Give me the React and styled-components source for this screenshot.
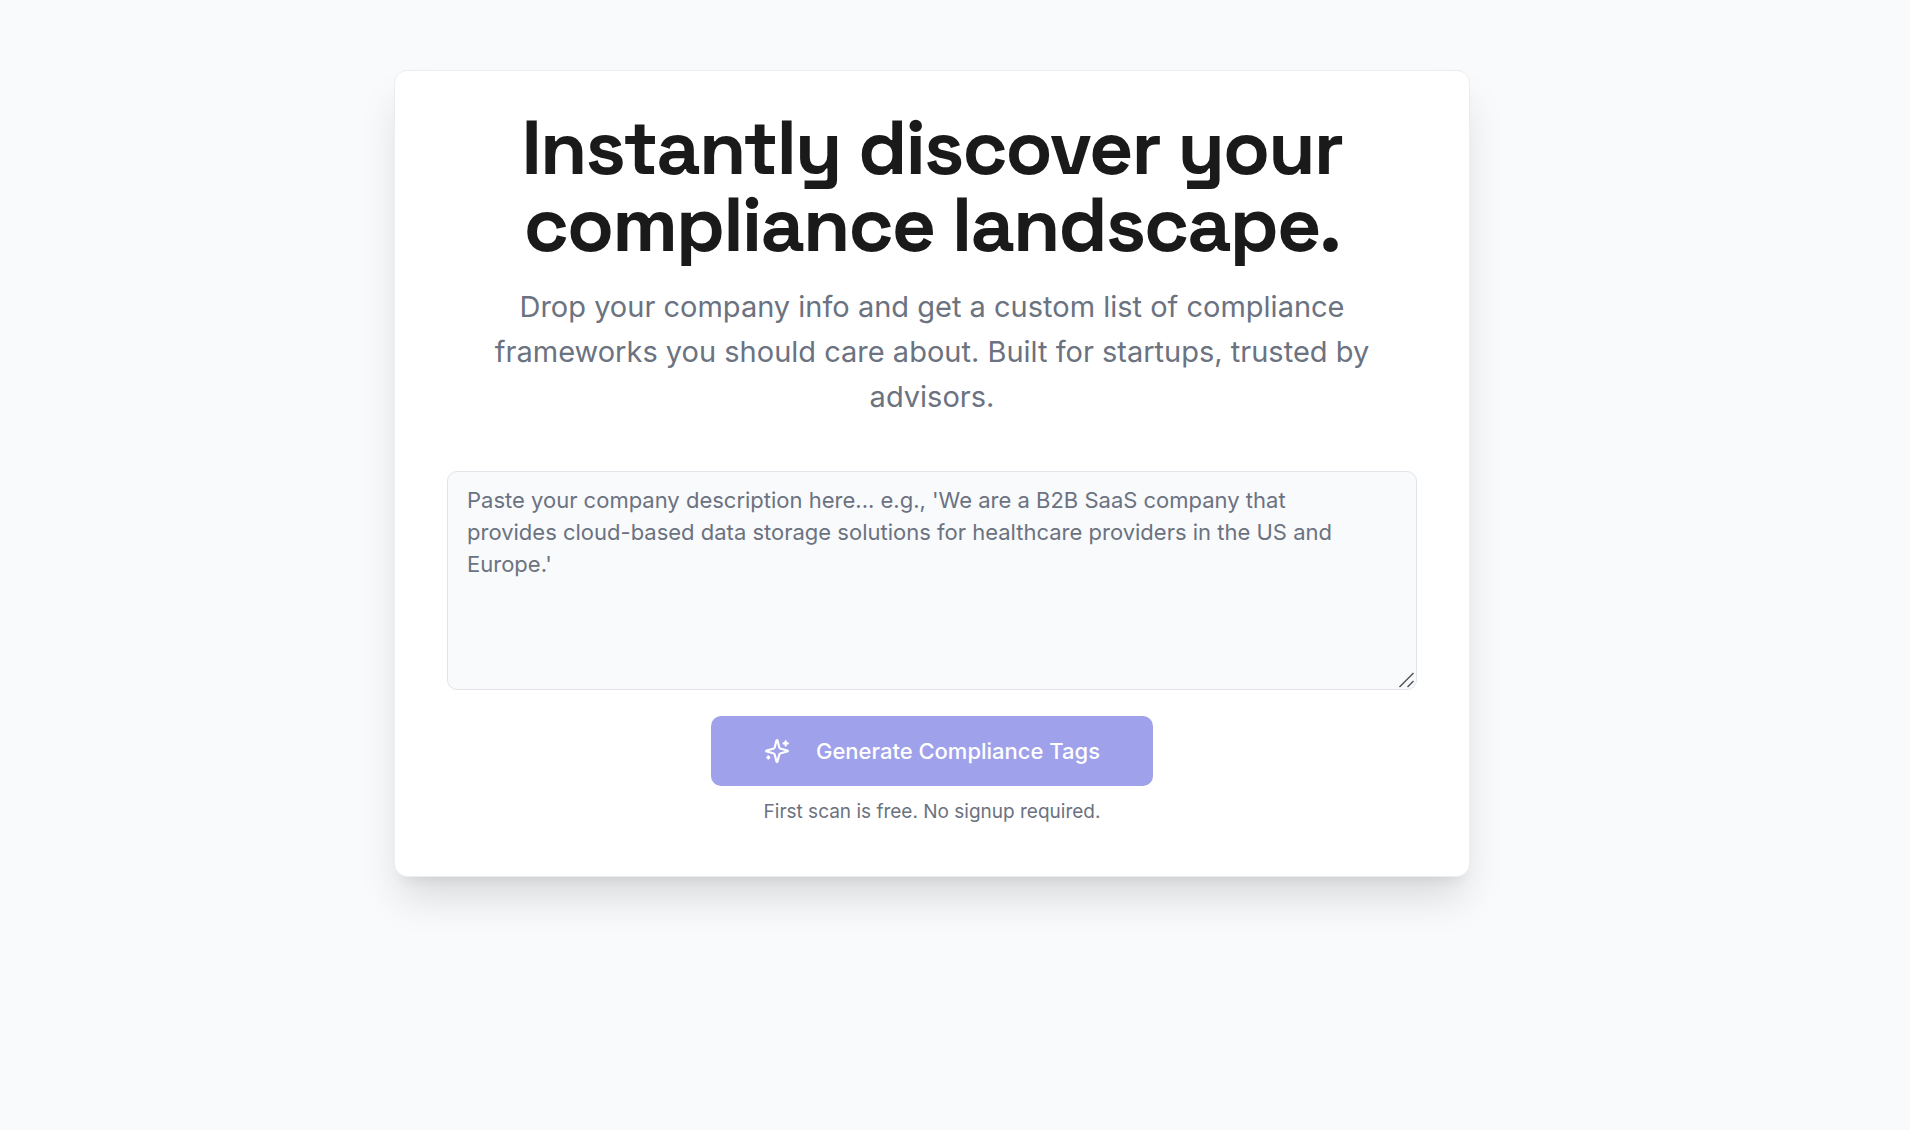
import React, { useState } from "react";
import styled, { createGlobalStyle } from "styled-components";

const GlobalStyle = createGlobalStyle`
  *, *::before, *::after {
    box-sizing: border-box;
  }

  body {
    margin: 0;
    background: #f9fafc;
    color: #1a1a1a;
    font-family: Inter, "Liberation Sans", sans-serif;
    -webkit-font-smoothing: antialiased;
  }
`;

const Page = styled.main`
  display: flex;
  justify-content: center;
  align-items: flex-start;
  min-height: 100vh;
  padding: 70px 70px 70px 24px;
`;

const Card = styled.section`
  width: 100%;
  max-width: 1076px;
  padding: 38px 52px 51px;
  background: #ffffff;
  border: 1px solid #ebedee;
  border-radius: 13px;
  box-shadow:
    0 26px 40px -6px rgba(0, 0, 0, 0.13),
    0 10px 13px -8px rgba(0, 0, 0, 0.08);
`;

const Header = styled.header`
  display: flex;
  flex-direction: column;
  gap: 21px;
  padding: 0 32px;
  text-align: center;
`;

const Title = styled.h1`
  margin: 0;
  font-family: "Space Grotesk", Inter, "Liberation Sans", sans-serif;
  font-size: 77px;
  font-weight: 700;
  line-height: 77px;
  letter-spacing: -0.025em;
`;

const Lead = styled.p`
  margin: 0;
  color: #6b7280;
  font-size: 29px;
  line-height: 45px;
`;

const Form = styled.form`
  display: flex;
  flex-direction: column;
  align-items: center;
  margin-top: 52px;
`;

const Field = styled.div`
  position: relative;
  width: 100%;
`;

const Description = styled.textarea`
  display: block;
  width: 100%;
  height: 219px;
  padding: 12px 39px 12px 19px;
  background: #f9fafc;
  border: 1px solid #e1e4e8;
  border-radius: 10px;
  color: #1a1a1a;
  font-family: inherit;
  font-size: 22px;
  line-height: 32px;
  resize: vertical;

  &::placeholder {
    color: #6b7280;
    opacity: 1;
  }

  &::-webkit-resizer {
    background: transparent;
  }
`;

const Grip = styled.svg`
  position: absolute;
  right: 2px;
  bottom: 2px;
  pointer-events: none;
`;

const SubmitButton = styled.button`
  display: inline-flex;
  align-items: center;
  gap: 26px;
  height: 70px;
  margin-top: 26px;
  padding: 0 53px;
  background: #9fa1ea;
  border: 0;
  border-radius: 10px;
  color: #ffffff;
  font-family: inherit;
  font-size: 22px;
  font-weight: 500;
  line-height: 32px;
`;

const Note = styled.p`
  margin: 13px 0 0;
  color: #6b7280;
  font-size: 19px;
  line-height: 26px;
`;

function SparklesIcon() {
  return (
    <svg
      width="26"
      height="26"
      viewBox="0 0 24 24"
      fill="none"
      stroke="currentColor"
      strokeWidth="2"
      strokeLinecap="round"
      strokeLinejoin="round"
      aria-hidden="true"
    >
      <path d="M9.937 15.5A2 2 0 0 0 8.5 14.063l-6.135-1.582a.5.5 0 0 1 0-.962L8.5 9.936A2 2 0 0 0 9.937 8.5l1.582-6.135a.5.5 0 0 1 .963 0L14.063 8.5A2 2 0 0 0 15.5 9.937l6.135 1.581a.5.5 0 0 1 0 .964L15.5 14.063a2 2 0 0 0-1.437 1.437l-1.582 6.135a.5.5 0 0 1-.963 0z" />
      <path d="M20 3v4" />
      <path d="M22 5h-4" />
      <path d="M4 17v2" />
      <path d="M5 18H3" />
    </svg>
  );
}

export default function App() {
  const [description, setDescription] = useState("");

  return (
    <>
      <GlobalStyle />
      <Page>
        <Card>
          <Header>
            <Title>Instantly discover your compliance landscape.</Title>
            <Lead>
              Drop your company info and get a custom list of compliance
              frameworks you should care about. Built for startups, trusted by
              advisors.
            </Lead>
          </Header>
          <Form onSubmit={(event) => event.preventDefault()}>
            <Field>
              <Description
                aria-label="Company description"
                value={description}
                onChange={(event) => setDescription(event.target.value)}
                placeholder="Paste your company description here... e.g., 'We are a B2B SaaS company that provides cloud-based data storage solutions for healthcare providers in the US and Europe.'"
              />
              <Grip width="16" height="16" viewBox="0 0 16 16" stroke="#4d4f52" strokeWidth="1.4" aria-hidden="true">
                <path d="M0.5 15L14.5 1M8.5 15L14.5 9" />
              </Grip>
            </Field>
            <SubmitButton type="submit" disabled={!description.trim()}>
              <SparklesIcon />
              Generate Compliance Tags
            </SubmitButton>
            <Note>First scan is free. No signup required.</Note>
          </Form>
        </Card>
      </Page>
    </>
  );
}
